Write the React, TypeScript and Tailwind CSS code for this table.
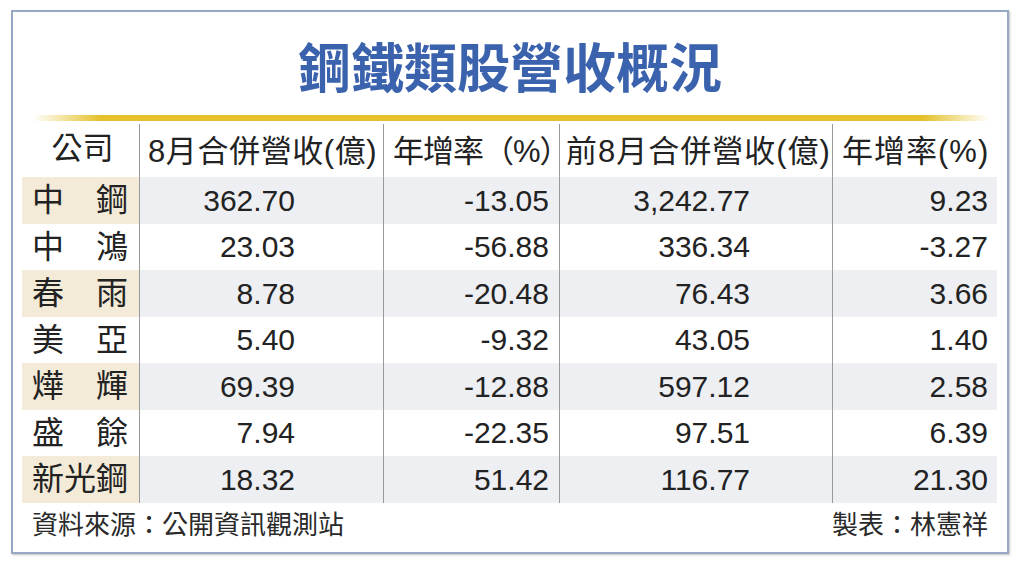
import React from "react";

type Row = {
  name: string[];
  rev: string;
  yoy: string;
  cum: string;
  cumYoy: string;
};

const rows: Row[] = [
  { name: ["中", "鋼"], rev: "362.70", yoy: "-13.05", cum: "3,242.77", cumYoy: "9.23" },
  { name: ["中", "鴻"], rev: "23.03", yoy: "-56.88", cum: "336.34", cumYoy: "-3.27" },
  { name: ["春", "雨"], rev: "8.78", yoy: "-20.48", cum: "76.43", cumYoy: "3.66" },
  { name: ["美", "亞"], rev: "5.40", yoy: "-9.32", cum: "43.05", cumYoy: "1.40" },
  { name: ["燁", "輝"], rev: "69.39", yoy: "-12.88", cum: "597.12", cumYoy: "2.58" },
  { name: ["盛", "餘"], rev: "7.94", yoy: "-22.35", cum: "97.51", cumYoy: "6.39" },
  { name: ["新", "光", "鋼"], rev: "18.32", yoy: "51.42", cum: "116.77", cumYoy: "21.30" },
];

const font = "font-['Liberation_Sans','Noto_Sans_CJK_TC',sans-serif]";

const App = () => {
  return (
    <div className={`w-[1024px] h-[568px] bg-white pt-[10px] pl-[11px] ${font} text-[#222]`}>
      <div className="w-[998px] h-[544px] border-2 border-[#97a8c4] shadow-[1px_1px_2px_rgba(0,0,0,0.25)] flex flex-col">
        <div className="h-[103px] flex items-center justify-center pt-[4px]">
          <h1 className="text-[53px] font-bold text-[#3b62ad] leading-none font-['Noto_Sans_CJK_TC',sans-serif]">
            鋼鐵類股營收概況
          </h1>
        </div>
        <div className="ml-[20px] mr-[17px] h-[6px] bg-[linear-gradient(to_right,rgba(232,194,39,0)_0%,#e6c12c_7%,#e6c12c_93%,rgba(232,194,39,0)_100%)]" />

        <div className="ml-[9px] grid grid-cols-[117px_244px_176px_273px_165px]">
          {/* header */}
          <div className="h-[56px] flex items-center justify-center text-[31px] pl-[4px]">公司</div>
          <div className="h-[56px] flex items-center pl-[8px] text-[31px] tracking-[0.6px] border-l border-[#9a9a9a] mt-[3px] -mb-[3px] whitespace-nowrap">
            8月合併營收(億)
          </div>
          <div className="h-[56px] flex items-center pl-[9px] text-[31px] tracking-[-1px] border-l border-[#9a9a9a] mt-[3px] -mb-[3px] whitespace-nowrap">
            年增率（%）
          </div>
          <div className="h-[56px] flex items-center pl-[6px] text-[31px] tracking-[1px] border-l border-[#9a9a9a] mt-[3px] -mb-[3px] whitespace-nowrap">
            前8月合併營收(億)
          </div>
          <div className="h-[56px] flex items-center pl-[9px] text-[31px] tracking-[1px] border-l border-[#9a9a9a] mt-[3px] -mb-[3px] whitespace-nowrap">
            年增率(%)
          </div>

          {rows.map((r, i) => {
            const shaded = i % 2 === 0;
            const bg = shaded ? "bg-[#edeff2]" : "bg-white";
            return (
              <React.Fragment key={r.rev}>
                <div
                  className={`h-[46.5px] flex items-center justify-between pl-[10px] pr-[11px] text-[32px] ${
                    shaded ? "bg-[#f3ead8]" : "bg-white"
                  }`}
                >
                  {r.name.map((c) => (
                    <span key={c}>{c}</span>
                  ))}
                </div>
                <div className={`h-[46.5px] flex items-center justify-end pr-[88px] text-[30px] border-l border-[#9a9a9a] ${bg}`}>
                  {r.rev}
                </div>
                <div className={`h-[46.5px] flex items-center justify-end pr-[10px] text-[30px] border-l border-[#9a9a9a] ${bg}`}>
                  {r.yoy}
                </div>
                <div className={`h-[46.5px] flex items-center justify-end pr-[82px] text-[30px] border-l border-[#9a9a9a] ${bg}`}>
                  {r.cum}
                </div>
                <div className={`h-[46.5px] flex items-center justify-end pr-[9px] text-[30px] border-l border-[#9a9a9a] ${bg}`}>
                  {r.cumYoy}
                </div>
              </React.Fragment>
            );
          })}
        </div>

        <div className="flex-1 flex items-center justify-between pl-[19px] pr-[19px] pb-[4px] text-[26px] text-[#2a2a2a]">
          <span>資料來源：公開資訊觀測站</span>
          <span>製表：林憲祥</span>
        </div>
      </div>
    </div>
  );
};

export default App;
